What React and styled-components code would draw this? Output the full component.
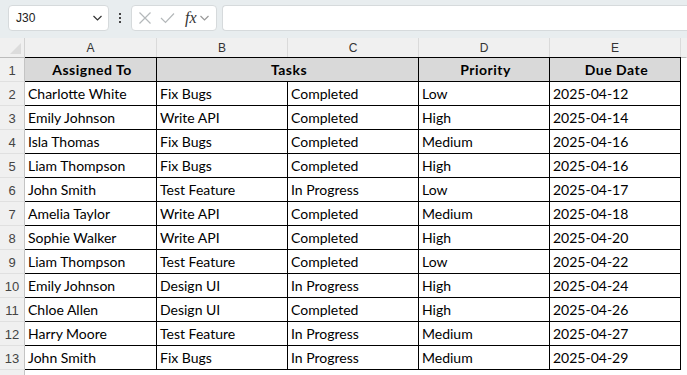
import React from 'react'
import styled, { createGlobalStyle } from 'styled-components'

const GlobalStyle = createGlobalStyle`
  html, body {
    margin: 0;
    padding: 0;
    background: #ffffff;
    overflow: hidden;
  }
  body {
    font-family: Lato, "Open Sans", sans-serif;
  }
`

const rows = [
  ['Charlotte White', 'Fix Bugs', 'Completed', 'Low', '2025-04-12'],
  ['Emily Johnson', 'Write API', 'Completed', 'High', '2025-04-14'],
  ['Isla Thomas', 'Fix Bugs', 'Completed', 'Medium', '2025-04-16'],
  ['Liam Thompson', 'Fix Bugs', 'Completed', 'High', '2025-04-16'],
  ['John Smith', 'Test Feature', 'In Progress', 'Low', '2025-04-17'],
  ['Amelia Taylor', 'Write API', 'Completed', 'Medium', '2025-04-18'],
  ['Sophie Walker', 'Write API', 'Completed', 'High', '2025-04-20'],
  ['Liam Thompson', 'Test Feature', 'Completed', 'Low', '2025-04-22'],
  ['Emily Johnson', 'Design UI', 'In Progress', 'High', '2025-04-24'],
  ['Chloe Allen', 'Design UI', 'Completed', 'High', '2025-04-26'],
  ['Harry Moore', 'Test Feature', 'In Progress', 'Medium', '2025-04-27'],
  ['John Smith', 'Fix Bugs', 'In Progress', 'Medium', '2025-04-29'],
]

const Page = styled.div`
  width: 687px;
  height: 375px;
  display: flex;
  flex-direction: column;
  overflow: hidden;
`

const Toolbar = styled.div`
  height: 38px;
  flex: none;
  background: #e8edef;
  display: flex;
  align-items: flex-start;
  padding: 5px 0 0 8px;
  box-sizing: border-box;
`

const NameBox = styled.div`
  width: 101px;
  height: 26px;
  box-sizing: border-box;
  background: #fff;
  border: 1px solid #d6dadc;
  border-radius: 4px;
  display: flex;
  align-items: center;
  justify-content: space-between;
  padding: 0 5px 0 7px;
  font-family: "Liberation Sans", Arial, sans-serif;
  font-size: 12px;
  color: #222;
`

const Dots = styled.div`
  width: 22px;
  height: 26px;
  display: flex;
  flex-direction: column;
  align-items: center;
  justify-content: center;
  gap: 2px;
  span {
    width: 2px;
    height: 2px;
    background: #444;
  }
`

const FxBox = styled.div`
  width: 86px;
  height: 26px;
  box-sizing: border-box;
  background: #fff;
  border: 1px solid #d6dadc;
  border-radius: 4px;
  display: flex;
  align-items: center;
  padding: 0 0 0 6px;
  gap: 8px;
`

const FxLabel = styled.span`
  font-family: "Liberation Serif", "DejaVu Serif", serif;
  font-style: italic;
  font-size: 16px;
  color: #333;
  margin-left: 2px;
  margin-right: -6px;
`

const FormulaInput = styled.div`
  flex: 1;
  height: 26px;
  margin-left: 5px;
  background: #fff;
  border: 1px solid #d6dadc;
  border-right: none;
  border-radius: 4px 0 0 4px;
  box-sizing: border-box;
`

const Sheet = styled.div`
  display: grid;
  grid-template-columns: 25px 132px 131px 131px 131px 131px 1fr;
  grid-auto-rows: 24px;
  grid-template-rows: 20px;
  font-size: 14px;
  color: #000;
`

const Corner = styled.div`
  background: #f0f0f0;
  border-right: 1px solid #d2d2d2;
  border-bottom: 1px solid #bcbcbc;
  position: relative;
  &::after {
    content: '';
    position: absolute;
    right: 3px;
    bottom: 3px;
    border-style: solid;
    border-width: 0 0 11px 11px;
    border-color: transparent transparent #dcdcdc transparent;
  }
`

const ColHead = styled.div`
  background: #f0f0f0;
  border-right: 1px solid ${({ last }) => (last ? 'transparent' : '#dadada')};
  border-bottom: 1px solid #bcbcbc;
  display: flex;
  align-items: center;
  justify-content: center;
  font-family: "Liberation Sans", Arial, sans-serif;
  font-size: 12px;
  color: #333;
  padding-top: 1px;
`

const RowHead = styled.div`
  background: #f0f0f0;
  border-right: 1px solid #c4c4c4;
  border-bottom: 1px solid #e0e0e0;
  display: flex;
  align-items: center;
  justify-content: center;
  font-family: "Liberation Sans", Arial, sans-serif;
  font-size: 13px;
  color: #444;
  padding-top: 1px;
`

const Cell = styled.div`
  border-right: 1px solid #000;
  border-bottom: 1px solid #000;
  border-top: ${({ top }) => (top ? '1px solid #000' : 'none')};
  margin-top: ${({ top }) => (top ? '-1px' : '0')};
  background: ${({ head }) => (head ? '#d9d9d9' : '#fff')};
  font-weight: ${({ head }) => (head ? 700 : 400)};
  letter-spacing: ${({ head }) => (head ? '0.5px' : '0')};
  grid-column: ${({ span }) => (span ? `span ${span}` : 'auto')};
  display: flex;
  align-items: center;
  justify-content: ${({ head }) => (head ? 'center' : 'flex-start')};
  padding: 0 0 0 3px;
  white-space: nowrap;
  overflow: hidden;
  box-sizing: border-box;
`

const Blank = styled.div`
  background: #fff;
`

const Chevron = ({ color = '#333' }) => (
  <svg width="11" height="10" viewBox="0 0 11 10">
    <path d="M1.5 3 L5.5 7 L9.5 3" fill="none" stroke={color} strokeWidth="1.2" />
  </svg>
)

const XIcon = () => (
  <svg width="14" height="14" viewBox="0 0 14 14">
    <path d="M1.5 1.5 L12.5 12.5 M12.5 1.5 L1.5 12.5" stroke="#b4b8ba" strokeWidth="1.2" />
  </svg>
)

const CheckIcon = () => (
  <svg width="15" height="14" viewBox="0 0 15 14">
    <path d="M1 7 L5.5 11.5 L14 2.5" fill="none" stroke="#b4b8ba" strokeWidth="1.2" />
  </svg>
)

const App = () => {
  return (
    <Page>
      <GlobalStyle />
      <Toolbar>
        <NameBox>
          <span>J30</span>
          <Chevron />
        </NameBox>
        <Dots>
          <span />
          <span />
          <span />
        </Dots>
        <FxBox>
          <XIcon />
          <CheckIcon />
          <FxLabel>fx</FxLabel>
          <Chevron color="#999" />
        </FxBox>
        <FormulaInput />
      </Toolbar>
      <Sheet>
        <Corner />
        {['A', 'B', 'C', 'D', 'E'].map((c) => (
          <ColHead key={c}>{c}</ColHead>
        ))}
        <ColHead last />

        <RowHead>1</RowHead>
        <Cell head top>Assigned To</Cell>
        <Cell head top span={2}>Tasks</Cell>
        <Cell head top>Priority</Cell>
        <Cell head top>Due Date</Cell>
        <Blank />

        {rows.map((r, i) => (
          <React.Fragment key={i}>
            <RowHead>{i + 2}</RowHead>
            {r.map((v, j) => (
              <Cell key={j}>{v}</Cell>
            ))}
            <Blank />
          </React.Fragment>
        ))}
        <RowHead />
      </Sheet>
    </Page>
  )
}

export default App
